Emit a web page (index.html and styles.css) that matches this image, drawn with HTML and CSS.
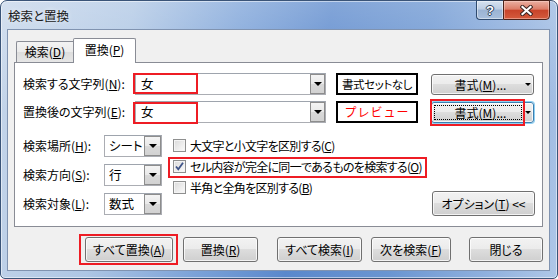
FILE: index.html
```html
<!DOCTYPE html>
<html lang="ja">
<head>
<meta charset="utf-8">
<title>検索と置換</title>
<link rel="stylesheet" href="styles.css">
</head>
<body>
<div class="window">
  <div class="titlebar">
    <div class="title">検索と置換</div>
    <div class="caption">
      <div class="cbtn help"><span class="q">?</span></div>
      <div class="cbtn close">
        <svg width="13" height="11" viewBox="0 0 13 11"><path d="M2.5 2L10.5 9M10.5 2L2.5 9" stroke="#3b2421" stroke-width="4.2" stroke-linecap="square" fill="none"/><path d="M2.5 2L10.5 9M10.5 2L2.5 9" stroke="#fff" stroke-width="2.2" stroke-linecap="square" fill="none"/></svg>
      </div>
    </div>
  </div>
  <div class="client">
    <div class="tabs">
      <div class="tab">検索(<u>D</u>)</div>
      <div class="tab active">置換(<u>P</u>)</div>
    </div>
    <div class="panel">
      <div class="row">
        <span class="lbl-wide">検索する文字列(<u>N</u>):</span>
        <div class="combo wide"><span class="val">女</span><span class="dd"><i class="tri"></i></span><span class="hl hl-find"></span></div>
        <div class="preview">書式セットなし</div>
        <div class="btn fmt"><span class="fmt-text">書式(<u>M</u>)...</span><i class="tri small"></i></div>
      </div>
      <div class="row row2">
        <span class="lbl-wide">置換後の文字列(<u>E</u>):</span>
        <div class="combo wide"><span class="val">女</span><span class="dd"><i class="tri"></i></span><span class="hl hl-repl"></span></div>
        <div class="preview red">プレビュー</div>
        <div class="btn fmt focused"><span class="fmt-text">書式(<u>M</u>)...</span><i class="tri small"></i><span class="focus-rect"></span><span class="hl hl-fmt"></span></div>
      </div>
      <div class="lower">
        <div class="selects">
          <div class="sel-row"><span class="lbl">検索場所(<u>H</u>):</span><div class="combo sel"><span class="val">シート</span><span class="dd"><i class="tri"></i></span></div></div>
          <div class="sel-row"><span class="lbl">検索方向(<u>S</u>):</span><div class="combo sel"><span class="val">行</span><span class="dd"><i class="tri"></i></span></div></div>
          <div class="sel-row"><span class="lbl">検索対象(<u>L</u>):</span><div class="combo sel"><span class="val">数式</span><span class="dd"><i class="tri"></i></span></div></div>
        </div>
        <div class="checks">
          <div class="chk-row"><span class="box"></span><span>大文字と小文字を区別する(<u>C</u>)</span></div>
          <div class="chk-row"><span class="box"><svg width="11" height="11" viewBox="0 0 11 11"><path d="M2 5.5L4.3 8.3L9 1.8" stroke="#3f5488" stroke-width="1.8" fill="none"/></svg></span><span>セル内容が完全に同一であるものを検索する(<u>O</u>)</span><span class="hl hl-chk"></span></div>
          <div class="chk-row"><span class="box"></span><span>半角と全角を区別する(<u>B</u>)</span></div>
        </div>
        <div class="btn opt">オプション(<u>T</u>) &lt;&lt;</div>
      </div>
    </div>
    <div class="buttons">
      <div class="btn b-all">すべて置換(<u>A</u>)<span class="hl hl-all"></span></div>
      <div class="btn b-repl">置換(<u>R</u>)</div>
      <div class="btn b-findall">すべて検索(<u>I</u>)</div>
      <div class="btn b-next">次を検索(<u>F</u>)</div>
      <div class="btn b-close">閉じる</div>
    </div>
  </div>
</div>
</body>
</html>
```

FILE: styles.css
```css
* { box-sizing: border-box; }
html, body { margin: 0; padding: 0; }
body {
  width: 558px;
  height: 279px;
  overflow: hidden;
  background: #ffffff;
  font-family: "Noto Sans CJK JP", "Noto Sans", sans-serif;
  font-size: 12px;
  color: #000;
  font-feature-settings: "palt";
  white-space: nowrap;
}
u { text-decoration: underline; text-underline-offset: 1px; }

.window {
  width: 558px;
  height: 279px;
  border: 1px solid #3a5478;
  border-radius: 7px 7px 5px 5px;
  padding: 0 7px 7px 6px;
  display: flex;
  flex-direction: column;
  background:
    linear-gradient(180deg, rgba(255,255,255,0.25) 0%, rgba(255,255,255,0) 40%),
    linear-gradient(100deg, #c6d6ea 0%, #aec6e4 22%, #7ba2d8 40%, #5a88cc 55%, #6a95d1 72%, #8fb0de 88%, #b0c8e8 100%);
  box-shadow: inset 0 0 0 1px rgba(255,255,255,0.5);
}

.titlebar {
  height: 28px;
  display: flex;
  justify-content: space-between;
  align-items: flex-start;
  flex-shrink: 0;
}
.title {
  margin: 6px 0 0 1px;
  line-height: 17px;
  font-size: 12.5px;
  color: #1a1a1a;
  text-shadow: 0 0 5px rgba(255,255,255,0.7);
}
.caption { display: flex; margin-top: -1px; }
.cbtn {
  height: 20px;
  border: 1px solid #2f4a6e;
  display: flex;
  align-items: center;
  justify-content: center;
}
.help {
  width: 27px;
  border-right: none;
  border-radius: 0 0 0 4px;
  background: linear-gradient(180deg, #d6e2f0 0%, #bccde3 45%, #9bb3d3 50%, #a8bfdc 100%);
  box-shadow: inset 0 0 0 1px rgba(255,255,255,0.45);
}
.q {
  font-family: "Liberation Sans", sans-serif;
  font-weight: bold;
  font-size: 13px;
  line-height: 13px;
  color: #fff;
  text-shadow: 1px 0 #2c3d57, -1px 0 #2c3d57, 0 1px #2c3d57, 0 -1px #2c3d57;
}
.close {
  width: 47px;
  border-color: #4a2219;
  border-radius: 0 0 4px 0;
  background: linear-gradient(180deg, #eab0a2 0%, #dc7d68 45%, #c8442a 52%, #d45b3d 100%);
  box-shadow: inset 0 0 0 1px rgba(255,220,210,0.45);
}

.client {
  flex: 1;
  background: #f0f0f0;
  border: 1px solid #8093b0;
  display: flex;
  flex-direction: column;
}

.tabs {
  display: flex;
  align-items: flex-end;
  height: 24px;
  margin: 8px 0 0 8px;
  position: relative;
  z-index: 1;
}
.tab {
  width: 57px;
  height: 21px;
  border: 1px solid #898c95;
  border-bottom: none;
  border-right: none;
  border-radius: 2px 0 0 0;
  background: linear-gradient(180deg, #f3f3f3 0%, #ebebeb 50%, #dddddd 50%, #e6e6e6 100%);
  display: flex;
  align-items: center;
  justify-content: center;
  line-height: 16px;
}
.tab.active {
  width: 63px;
  height: 25px;
  margin-bottom: -1px;
  border-right: 1px solid #898c95;
  border-radius: 2px 2px 0 0;
  background: #ffffff;
  padding-bottom: 2px;
}

.panel {
  margin: 0 6px;
  height: 165px;
  border: 1px solid #898c95;
  background: #ffffff;
  padding: 10px 7px 0 8px;
  flex-shrink: 0;
}

.row {
  display: flex;
  align-items: flex-start;
  height: 22px;
}
.row2 { margin-top: 6px; }
.lbl-wide { width: 112px; line-height: 22px; }

.combo {
  position: relative;
  display: flex;
  height: 22px;
  border: 1px solid #abadb3;
  border-top-color: #9ea4ad;
  background: #fff;
}
.combo.wide { width: 191px; }
.combo .val { flex: 1; padding-left: 5px; line-height: 20px; font-size: 12.5px; }
.dd {
  width: 15px;
  margin: 0;
  border: 1px solid #8d8d8d;
  background: linear-gradient(180deg, #f4f4f4 0%, #e9e9e9 50%, #d9d9d9 51%, #d2d2d2 100%);
  display: flex;
  align-items: center;
  justify-content: center;
}
.tri {
  display: block;
  width: 0;
  height: 0;
  border-left: 4px solid transparent;
  border-right: 4px solid transparent;
  border-top: 4px solid #000;
}
.tri.small {
  border-left-width: 3px;
  border-right-width: 3px;
  border-top-width: 3px;
}

.preview {
  width: 82px;
  height: 22px;
  margin-left: 10px;
  border: 2px solid #000;
  display: flex;
  align-items: center;
  justify-content: center;
  line-height: 16px;
  font-size: 11.5px;
  letter-spacing: -0.4px;
}
.preview.red {
  color: #ff0000;
  font-size: 12px;
  font-feature-settings: normal;
  letter-spacing: 1px;
}

.btn {
  position: relative;
  height: 25px;
  border: 1px solid #707070;
  border-radius: 3px;
  background: linear-gradient(180deg, #f2f2f2 0%, #ebebeb 50%, #dddddd 50%, #cfcfcf 100%);
  box-shadow: inset 0 0 0 1px rgba(255,255,255,0.75);
  display: flex;
  align-items: center;
  justify-content: center;
  line-height: 16px;
}
.btn.fmt {
  width: 103px;
  height: 21px;
  margin: 1px 0 0 13px;
  justify-content: flex-start;
  padding-right: 2px;
}
.fmt-text { flex: 1; display: flex; justify-content: center; padding-left: 4px; }
.btn.focused {
  border-color: #3c7fb1;
  box-shadow: 0 0 0 1px #8fd0f2, inset 0 0 0 1px rgba(255,255,255,0.8);
}
.focus-rect {
  position: absolute;
  left: 2px;
  top: 2px;
  width: 88px;
  height: 15px;
  border: 1px dotted #000;
  pointer-events: none;
}

.hl {
  position: absolute;
  border: 2px solid #ee1c24;
  pointer-events: none;
}
.hl-find { left: -3px; top: -1px; width: 65px; height: 21px; }
.hl-repl { left: -3px; top: 0; width: 65px; height: 22px; }
.hl-fmt { left: -2px; top: -4px; width: 95px; height: 27px; }
.hl-chk { left: -5px; top: 1px; width: 259px; height: 21px; }
.hl-all { left: -7px; top: -4px; width: 99px; height: 31px; }

.lower {
  display: flex;
  margin-top: 12px;
  height: 81px;
}
.selects { display: flex; flex-direction: column; gap: 7px; }
.sel-row { display: flex; align-items: center; height: 22px; }
.lbl { width: 81px; line-height: 22px; }
.combo.sel { width: 58px; }
.combo.sel .val { padding-left: 4px; }
.combo.sel .dd { width: 17px; }

.checks { margin-left: 11px; display: flex; flex-direction: column; }
.chk-row {
  position: relative;
  display: flex;
  align-items: center;
  height: 21px;
  gap: 4px;
  line-height: 16px;
  letter-spacing: -0.7px;
}
.box {
  width: 13px;
  height: 13px;
  border: 1px solid #8e8f8f;
  background: linear-gradient(135deg, #dadada 0%, #eeeeee 60%, #fbfbfb 100%);
  box-shadow: inset 0 0 0 1px #f4f4f4;
  display: flex;
  align-items: center;
  justify-content: center;
}

.btn.opt {
  width: 103px;
  height: 25px;
  margin: 0 0 0 auto;
  align-self: flex-end;
}

.buttons {
  display: flex;
  justify-content: flex-end;
  margin: 10px 6px 0 0;
  height: 25px;
}
.b-all { width: 88px; }
.b-repl { width: 75px; margin-left: 10px; }
.b-findall { width: 85px; margin-left: 19px; }
.b-next { width: 80px; margin-left: 9px; }
.b-close { width: 74px; margin-left: 18px; }
```
